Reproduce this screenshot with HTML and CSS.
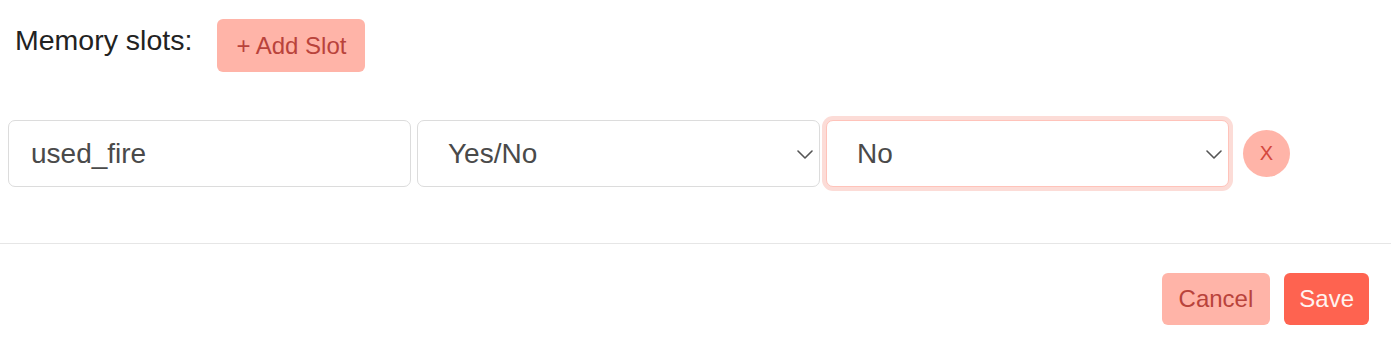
FILE: index.html
```html
<!DOCTYPE html>
<html lang="en">
<head>
    <meta charset="UTF-8">
    <meta name="viewport" content="width=device-width, initial-scale=1.0">
    <title>Memory slots</title>
    <link rel="stylesheet" href="styles.css">
</head>
<body>

    <div class="modal-body">
        <div class="slots-head">
            <span class="slots-label">Memory slots:</span>
            <button class="btn btn-soft">+ Add Slot</button>
        </div>

        <div class="slot-row">
            <input class="field" type="text" value="used_fire">
            <div class="select-wrap">
                <select class="field field-select">
                    <option>Yes/No</option>
                    <option>Text</option>
                    <option>Number</option>
                </select>
                <svg class="chevron" width="16" height="9" viewBox="0 0 16 9"><path d="M1 1 L8 8 L15 1" fill="none" stroke="#555" stroke-width="1.6" stroke-linecap="round" stroke-linejoin="round"/></svg>
            </div>
            <div class="select-wrap">
                <select class="field field-select is-focused">
                    <option>No</option>
                    <option>Yes</option>
                </select>
                <svg class="chevron" width="16" height="9" viewBox="0 0 16 9"><path d="M1 1 L8 8 L15 1" fill="none" stroke="#555" stroke-width="1.6" stroke-linecap="round" stroke-linejoin="round"/></svg>
            </div>
            <button class="remove-slot">X</button>
        </div>
    </div>

    <div class="modal-footer">
        <button class="btn btn-soft">Cancel</button>
        <button class="btn btn-save">Save</button>
    </div>

</body>
</html>
```

FILE: styles.css
```css
/* memory slot editor */
body {
    font-family: 'Liberation Sans', Arial, sans-serif;
    margin: 0;
    padding: 0;
    background-color: #fff;
    color: #222;
}

button {
    font-family: inherit;
    border: none;
    cursor: pointer;
}

.btn {
    font-size: 24px;
    line-height: 36px;
    padding: 8px 17px;
    border-radius: 6px;
}

.btn-soft {
    background-color: #ffb4a8;
    color: #b9433b;
}

.btn-save {
    background-color: #fe6350;
    color: #fff3ef;
    padding: 8px 15px;
}

.modal-body {
    padding: 19px 0 56px 8px;
}

.slots-head {
    display: flex;
    align-items: flex-start;
    padding-left: 7px;
}

.slots-label {
    font-size: 28.5px;
    line-height: 34px;
    margin-top: 4px;
    margin-right: 25px;
    color: #222;
}

.slots-head .btn {
    padding: 8px 19px;
    line-height: 37px;
}

.slot-row {
    display: flex;
    align-items: center;
    gap: 6px;
    margin-top: 48px;
}

.field {
    box-sizing: border-box;
    width: 403px;
    height: 67px;
    padding: 0 22px;
    font-family: inherit;
    font-size: 28px;
    color: #4a4a4a;
    background-color: #fff;
    border: 1px solid #dcdcdc;
    border-radius: 7px;
    outline: none;
}

.select-wrap {
    position: relative;
}

.field-select {
    appearance: none;
    -webkit-appearance: none;
    padding: 0 40px 0 30px;
}

.field-select.is-focused {
    border-color: #ffc3ba;
    box-shadow: 0 0 0 4px #fcdcd7;
}

.chevron {
    position: absolute;
    right: 7px;
    top: 30px;
    pointer-events: none;
}

.remove-slot {
    width: 47px;
    height: 47px;
    margin-left: 8px;
    border-radius: 50%;
    background-color: #ffb4a8;
    color: #d4483e;
    font-size: 20px;
    padding: 0;
}

.modal-footer {
    display: flex;
    justify-content: flex-end;
    gap: 14px;
    border-top: 1px solid #e6e6e6;
    padding: 29px 22px 0 0;
}
```
